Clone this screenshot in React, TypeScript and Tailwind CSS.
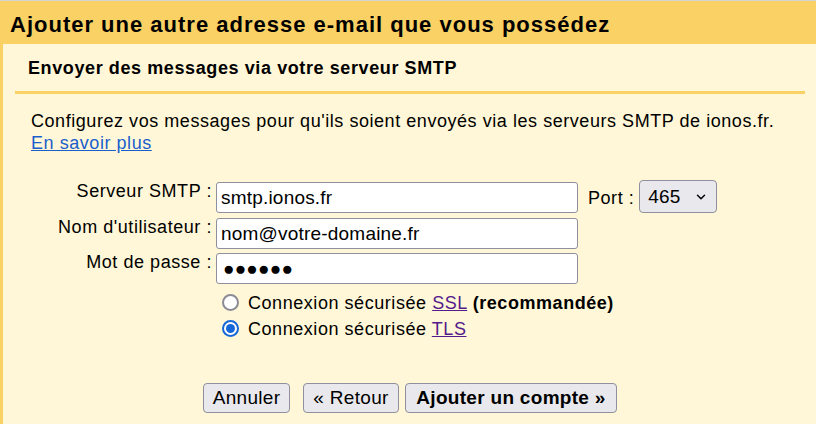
import { ChevronDown } from "lucide-react";

const Radio = ({ checked }: { checked?: boolean }) =>
  checked ? (
    <span className="mt-[4px] flex h-[17px] w-[17px] shrink-0 items-center justify-center rounded-full border-[2px] border-[#1467d9] bg-white">
      <span className="h-[9px] w-[9px] rounded-full bg-[#1467d9]" />
    </span>
  ) : (
    <span className="mt-[4px] h-[17px] w-[17px] shrink-0 rounded-full border-[2.5px] border-[#8b8b96] bg-white" />
  );

const inputCls =
  "h-[31px] w-[362px] rounded-[3px] border border-[#8f8f9d] bg-white px-[4px] text-[19px] tracking-[0.2px] text-black outline-none";

const btnCls =
  "flex h-[30px] items-center justify-center rounded-[4px] border border-[#8f8f9d] bg-[#e9e9ed] text-[19px] tracking-[0.3px] text-black";

export default function App() {
  return (
    <div className="h-[424px] w-[816px] overflow-hidden bg-[#d4d4d4] pt-px font-['Liberation_Sans',Arial,sans-serif] text-black">
      <div className="flex h-full flex-col bg-[#fad165]">
        {/* header */}
        <h1 className="h-[43px] shrink-0 pl-[10px] pt-[11px] text-[22px] font-bold leading-[26px] tracking-[1px]">
          Ajouter une autre adresse e-mail que vous possédez
        </h1>

        <div className="ml-[3px] flex-1 bg-[#fff7d7]">
          <h2 className="pl-[25px] pt-[13px] text-[18px] font-bold leading-[22px] tracking-[0.6px]">
            Envoyer des messages via votre serveur SMTP
          </h2>
          <div className="ml-[12px] mt-[12px] h-[3px] w-[790px] bg-[#fad165]" />

          <div className="px-[28px] pt-[16px] text-[18px] leading-[22px] tracking-[0.55px]">
            <p>
              Configurez vos messages pour qu'ils soient envoyés via les serveurs SMTP de ionos.fr.
              <br />
              <a href="#" className="text-[#1a5fcc] underline">
                En savoir plus
              </a>
            </p>

            {/* form */}
            <div className="mt-[26px] flex flex-col">
              <div className="flex items-start">
                <label className="w-[181px] text-right">Serveur SMTP :</label>
                <input readOnly value="smtp.ionos.fr" className={`ml-[4px] mt-[2px] ${inputCls}`} />
                <span className="ml-[10px] mt-[7px]">Port :</span>
                <div className="ml-[5px] flex h-[33px] w-[78px] items-center rounded-[4px] border border-[#8f8f9d] bg-[#e9e9ed] pl-[8px] text-[19px] tracking-[0.2px]">
                  <span>465</span>
                  <ChevronDown className="ml-[13px] h-[14px] w-[14px]" strokeWidth={2.5} />
                </div>
              </div>
              <div className="mt-[3px] flex items-start">
                <label className="w-[181px] text-right">Nom d'utilisateur :</label>
                <input readOnly value="nom@votre-domaine.fr" className={`ml-[4px] mt-[2px] ${inputCls}`} />
              </div>
              <div className="mt-[2px] flex items-start">
                <label className="w-[181px] text-right">Mot de passe :</label>
                <input readOnly value="●●●●●●" className={`ml-[4px] mt-[2px] ${inputCls} pl-[6px]`} />
              </div>
            </div>

            {/* security */}
            <div className="ml-[191px] mt-[6px] flex flex-col leading-[26px]">
              <div className="flex items-start gap-[9px]">
                <Radio />
                <span>
                  Connexion sécurisée{" "}
                  <a href="#" className="text-[#551a8b] underline">
                    SSL
                  </a>{" "}
                  <b>(recommandée)</b>
                </span>
              </div>
              <div className="flex items-start gap-[9px]">
                <Radio checked />
                <span>
                  Connexion sécurisée{" "}
                  <a href="#" className="text-[#551a8b] underline">
                    TLS
                  </a>
                </span>
              </div>
            </div>

            {/* actions */}
            <div className="ml-[172px] mt-[41px] flex">
              <button className={`${btnCls} w-[87px]`}>Annuler</button>
              <button className={`${btnCls} ml-[13px] w-[96px]`}>« Retour</button>
              <button className={`${btnCls} ml-[6px] w-[212px] font-bold`}>Ajouter un compte »</button>
            </div>
          </div>
        </div>
      </div>
    </div>
  );
}
